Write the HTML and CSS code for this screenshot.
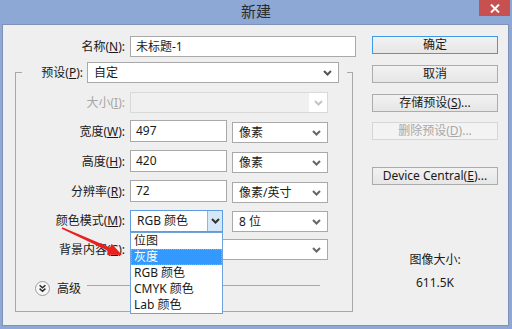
FILE: index.html
```html
<!DOCTYPE html>
<html lang="zh-CN">
<head>
<meta charset="UTF-8">
<title>新建</title>
<link rel="stylesheet" href="styles.css">
</head>
<body>
<div class="window">
    <div class="titlebar">
        <span></span>
        <div class="title">新建</div>
        <div class="close">
            <svg width="10" height="9" viewBox="0 0 10 9"><path d="M1 0.5 L9 8.5 M9 0.5 L1 8.5" stroke="#fff" stroke-width="2"/></svg>
        </div>
    </div>

    <div class="client">
        <div class="left">
            <div class="name-row">
                <span class="lbl name-lbl">名称(<u>N</u>):</span>
                <div class="field name-field">未标题-1</div>
            </div>

            <fieldset class="group">
                <legend class="preset">
                    <span class="lbl preset-lbl">预设(<u>P</u>):</span>
                    <div class="field select preset-select">自定
                        <svg class="chev" width="9" height="6" viewBox="0 0 9 6"><path d="M1 1 L4.5 4.5 L8 1" fill="none" stroke="#555" stroke-width="2"/></svg>
                    </div>
                </legend>

                <div class="rows">
                    <span class="lbl off">大小(<u>I</u>):</span>
                    <div class="field select span2 disabled">
                        <span class="drop-off">
                            <svg width="9" height="6" viewBox="0 0 9 6"><path d="M1 1 L4.5 4.5 L8 1" fill="none" stroke="#c4c4c4" stroke-width="2"/></svg>
                        </span>
                    </div>

                    <span class="lbl">宽度(<u>W</u>):</span>
                    <div class="field input">497</div>
                    <div class="field select unit">像素
                        <svg class="chev" width="9" height="6" viewBox="0 0 9 6"><path d="M1 1 L4.5 4.5 L8 1" fill="none" stroke="#666" stroke-width="2"/></svg>
                    </div>

                    <span class="lbl">高度(<u>H</u>):</span>
                    <div class="field input">420</div>
                    <div class="field select unit">像素
                        <svg class="chev" width="9" height="6" viewBox="0 0 9 6"><path d="M1 1 L4.5 4.5 L8 1" fill="none" stroke="#666" stroke-width="2"/></svg>
                    </div>

                    <span class="lbl">分辨率(<u>R</u>):</span>
                    <div class="field input">72</div>
                    <div class="field select unit">像素/英寸
                        <svg class="chev" width="9" height="6" viewBox="0 0 9 6"><path d="M1 1 L4.5 4.5 L8 1" fill="none" stroke="#666" stroke-width="2"/></svg>
                    </div>

                    <span class="lbl">颜色模式(<u>M</u>):</span>
                    <div class="field select mode">RGB 颜色
                        <span class="drop-btn">
                            <svg width="9" height="6" viewBox="0 0 9 6"><path d="M1 1 L4.5 4.5 L8 1" fill="none" stroke="#333" stroke-width="2"/></svg>
                        </span>
                        <div class="menu">
                            <div class="item">位图</div>
                            <div class="item active">灰度</div>
                            <div class="item">RGB 颜色</div>
                            <div class="item">CMYK 颜色</div>
                            <div class="item">Lab 颜色</div>
                        </div>
                    </div>
                    <div class="field select unit">8 位
                        <svg class="chev" width="9" height="6" viewBox="0 0 9 6"><path d="M1 1 L4.5 4.5 L8 1" fill="none" stroke="#666" stroke-width="2"/></svg>
                    </div>

                    <span class="lbl">背景内容(<u>C</u>):</span>
                    <div class="field select span2">
                        <svg class="chev" width="9" height="6" viewBox="0 0 9 6"><path d="M1 1 L4.5 4.5 L8 1" fill="none" stroke="#666" stroke-width="2"/></svg>
                    </div>
                </div>

                <div class="advanced">
                    <svg class="adv-icon" width="15" height="15" viewBox="0 0 15 15">
                        <circle cx="7.5" cy="7.5" r="7" fill="#f7f7f7" stroke="#9c9c9c"/>
                        <path d="M4.6 4.2 L7.5 6.8 L10.4 4.2 M4.6 7.6 L7.5 10.2 L10.4 7.6" fill="none" stroke="#2a2a2a" stroke-width="1.5"/>
                    </svg>
                    <span class="adv-text">高级</span>
                    <span class="adv-line"></span>
                </div>
            </fieldset>
        </div>

        <div class="right">
            <div class="btn default">确定</div>
            <div class="btn cancel">取消</div>
            <div class="btn save">存储预设(<u>S</u>)...</div>
            <div class="btn del off">删除预设(<u>D</u>)...</div>
            <div class="btn device">Device Central(<u>E</u>)...</div>
            <div class="info">
                <div>图像大小:</div>
                <div class="size">611.5K</div>
            </div>
        </div>
    </div>

    <!-- 红色标注箭头 -->
    <svg class="arrow" width="512" height="329" viewBox="0 0 512 329">
        <polygon points="62.3,227.3 110,247.4 111.7,243.8 122,255 106.8,254.7 108.4,251.1 61.7,228.7" fill="#e8211d"/>
    </svg>
</div>
</body>
</html>
```

FILE: styles.css
```css
* {
    box-sizing: border-box;
}
body {
    margin: 0;
    font-family: "Noto Sans", "Noto Sans CJK SC", sans-serif;
    font-size: 12px;
    color: #1a1a1a;
}
/* 窗口外框 */
.window {
    width: 512px;
    height: 329px;
    background: #8ea8d5;
    position: relative;
    overflow: hidden;
}
.titlebar {
    height: 25px;
    display: grid;
    grid-template-columns: 1fr auto 1fr;
}
.title {
    font-family: "Noto Sans CJK SC", sans-serif;
    font-size: 15px;
    line-height: 22px;
    color: #2c2c2c;
}
.close {
    justify-self: end;
    width: 31px;
    height: 16px;
    margin-right: 2px;
    background: #c75050;
    display: flex;
    align-items: center;
    justify-content: center;
}
/* 客户区 */
.client {
    margin: 0 4px 0 3px;
    height: 300px;
    background: #efefef;
    outline: 1px solid #7d91ba;
    display: flex;
}
.left {
    width: 357px;
    padding: 11px 0 0 12px;
}
.lbl {
    line-height: 16px;
    text-align: right;
    white-space: nowrap;
    align-self: center;
}
.lbl.off {
    color: #a6a6a6;
}
.name-row {
    display: flex;
    align-items: center;
    gap: 5px;
    height: 21px;
}
.name-lbl {
    width: 110px;
}
.field {
    height: 21px;
    background: #fff;
    border: 1px solid #a9a9a9;
    display: flex;
    align-items: center;
    padding-left: 5px;
    line-height: 16px;
    position: relative;
    white-space: nowrap;
}
.name-field {
    width: 226px;
}
.select {
    padding-left: 6px;
    padding-right: 6px;
}
.chev {
    margin-left: auto;
}
/* 分组框 */
.group {
    margin: 5px 0 0 0;
    width: 338px;
    min-width: 0;
    padding: 9px 0 15px 0;
    border: 1px solid #a8a8a8;
}
.preset {
    margin-left: 6px;
    padding: 0 8px 0 0;
    display: flex;
    align-items: center;
    gap: 4px;
    height: 21px;
}
.preset-lbl {
    width: 61px;
}
.preset-select {
    width: 252px;
}
.rows {
    display: grid;
    grid-template-columns: 109px 97px 96px;
    grid-template-rows: 21px 23px 23px 23px 22px 21px;
    column-gap: 5px;
    row-gap: 7px;
}
.span2 {
    grid-column: 2 / 4;
}
.input {
    height: 22px;
    align-self: start;
}
.unit {
    align-self: end;
}
.disabled {
    background: #f0f0f0;
    border-color: #d9d9d9;
    padding-right: 0;
}
.drop-off {
    margin-left: auto;
    width: 18px;
    align-self: stretch;
    background: #fff;
    display: flex;
    align-items: center;
    justify-content: center;
}
.mode {
    width: 93px;
    height: 22px;
    border-color: #5b9de0;
    padding-right: 0;
}
.drop-btn {
    margin-left: auto;
    width: 15px;
    align-self: stretch;
    background: #d6e7f8;
    border-left: 1px solid #86b8ea;
    display: flex;
    align-items: center;
    justify-content: center;
}
/* 下拉列表 */
.menu {
    position: absolute;
    top: calc(100% + 1px);
    left: -1px;
    width: 93px;
    background: #fff;
    border: 1px solid #6fa2da;
    z-index: 2;
}
.item {
    height: 16px;
    line-height: 16px;
    padding-left: 3px;
}
.item.active {
    background: #3399ff;
    color: #fff;
    outline: 1px dotted #e89a4a;
    outline-offset: -1px;
}
/* 高级 */
.advanced {
    display: flex;
    align-items: center;
    height: 15px;
    margin-top: 21px;
    padding-left: 19px;
}
.adv-text {
    margin-left: 7px;
    line-height: 16px;
}
.adv-line {
    flex: 1;
    height: 1px;
    background: #a8a8a8;
    margin: 0 32px 0 6px;
    align-self: flex-start;
    margin-top: 4px;
}
/* 右侧按钮 */
.right {
    width: 126px;
    margin-left: 12px;
    padding-top: 11px;
    display: flex;
    flex-direction: column;
}
.btn {
    height: 18px;
    border: 1px solid #acacac;
    background: linear-gradient(#f2f2f2, #e6e6e6);
    text-align: center;
    line-height: 16px;
    white-space: nowrap;
}
.btn.default {
    border-color: #3c9ae8;
}
.cancel,
.save {
    margin-top: 11px;
}
.del {
    margin-top: 10px;
}
.btn.off {
    color: #a8a8a8;
    border-color: #d6d6d6;
    background: #f3f3f3;
}
.device {
    margin-top: 27px;
}
.info {
    margin-top: 67px;
    text-align: center;
    line-height: 16px;
}
.size {
    margin-top: 7px;
}
.arrow {
    position: absolute;
    top: 0;
    left: 0;
    pointer-events: none;
}
```
